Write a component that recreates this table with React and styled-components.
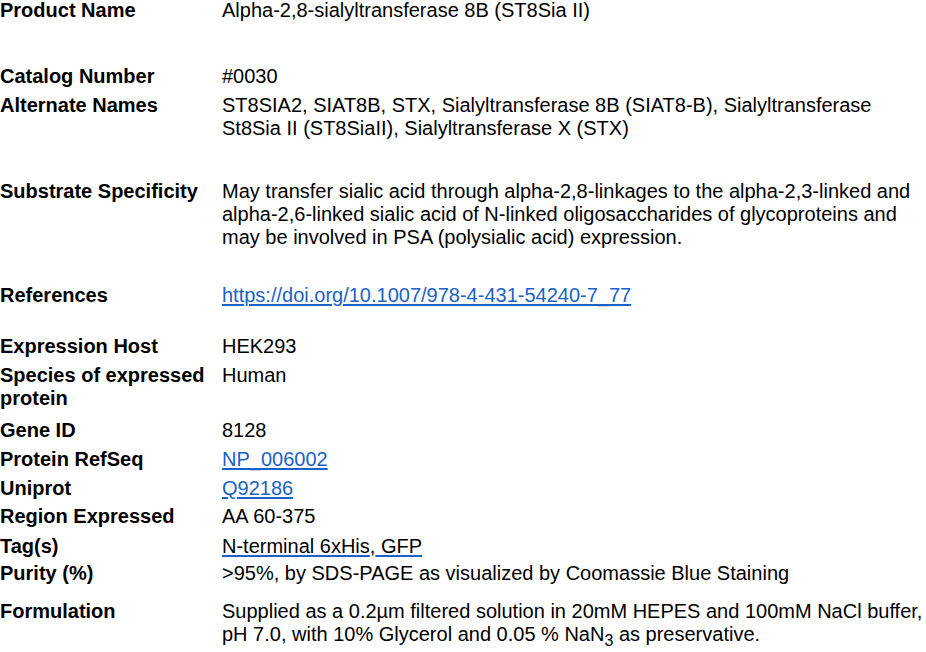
import React from "react";
import styled, { createGlobalStyle } from "styled-components";

const Global = createGlobalStyle`
  html, body { margin: 0; padding: 0; background: #ffffff; }
  body { font-family: "Liberation Sans", Arial, sans-serif; color: #000; }
`;

const Sheet = styled.div`
  width: 926px;
  margin-top: -1px;
  display: flex;
  flex-direction: column;
  font-size: 20px;
  line-height: 23px;
`;

const Row = styled.div`
  display: flex;
  align-items: flex-start;
  padding-bottom: ${(p) => p.$gap}px;
`;

const Label = styled.div`
  flex: 0 0 222px;
  font-weight: bold;
  padding-right: 6px;
  box-sizing: border-box;
`;

const Value = styled.div`
  flex: 1;
  padding-right: 2px;
`;

const Link = styled.a`
  color: ${(p) => (p.$plain ? "#000" : "#1a62c6")};
  text-decoration: underline;
  text-decoration-color: #1a62c6;
  text-underline-offset: 2px;
`;

const Sub = styled.sub`
  font-size: 0.8em;
  line-height: 0;
`;

const rows = [
  { label: "Product Name", gap: 43, value: "Alpha-2,8-sialyltransferase 8B (ST8Sia II)" },
  { label: "Catalog Number", gap: 6, value: "#0030" },
  {
    label: "Alternate Names",
    gap: 40,
    value:
      "ST8SIA2, SIAT8B, STX, Sialyltransferase 8B (SIAT8-B), Sialyltransferase St8Sia II (ST8SiaII), Sialyltransferase X (STX)",
  },
  {
    label: "Substrate Specificity",
    gap: 35,
    value:
      "May transfer sialic acid through alpha-2,8-linkages to the alpha-2,3-linked and alpha-2,6-linked sialic acid of N-linked oligosaccharides of glycoproteins and may be involved in PSA (polysialic acid) expression.",
  },
  {
    label: "References",
    gap: 28,
    value: <Link href="#">https://doi.org/10.1007/978-4-431-54240-7_77</Link>,
  },
  { label: "Expression Host", gap: 6, value: "HEK293" },
  { label: "Species of expressed protein", gap: 9, value: "Human" },
  { label: "Gene ID", gap: 6, value: "8128" },
  { label: "Protein RefSeq", gap: 6, value: <Link href="#">NP_006002</Link> },
  { label: "Uniprot", gap: 5, value: <Link href="#">Q92186</Link> },
  { label: "Region Expressed", gap: 7, value: "AA 60-375" },
  {
    label: "Tag(s)",
    gap: 4,
    value: (
      <>
        <Link href="#" $plain>
          N-terminal 6xHis
        </Link>
        ,
        <Link href="#" $plain>
          {" "}GFP
        </Link>
      </>
    ),
  },
  {
    label: "Purity (%)",
    gap: 15,
    value: ">95%, by SDS-PAGE as visualized by Coomassie Blue Staining",
  },
  {
    label: "Formulation",
    gap: 0,
    value: (
      <>
        Supplied as a 0.2µm filtered solution in 20mM HEPES and 100mM NaCl buffer, pH 7.0, with 10%
        Glycerol and 0.05 % NaN<Sub>3</Sub> as preservative.
      </>
    ),
  },
];

export default function App() {
  return (
    <>
      <Global />
      <Sheet>
        {rows.map((r) => (
          <Row key={r.label} $gap={r.gap}>
            <Label>{r.label}</Label>
            <Value>{r.value}</Value>
          </Row>
        ))}
      </Sheet>
    </>
  );
}
